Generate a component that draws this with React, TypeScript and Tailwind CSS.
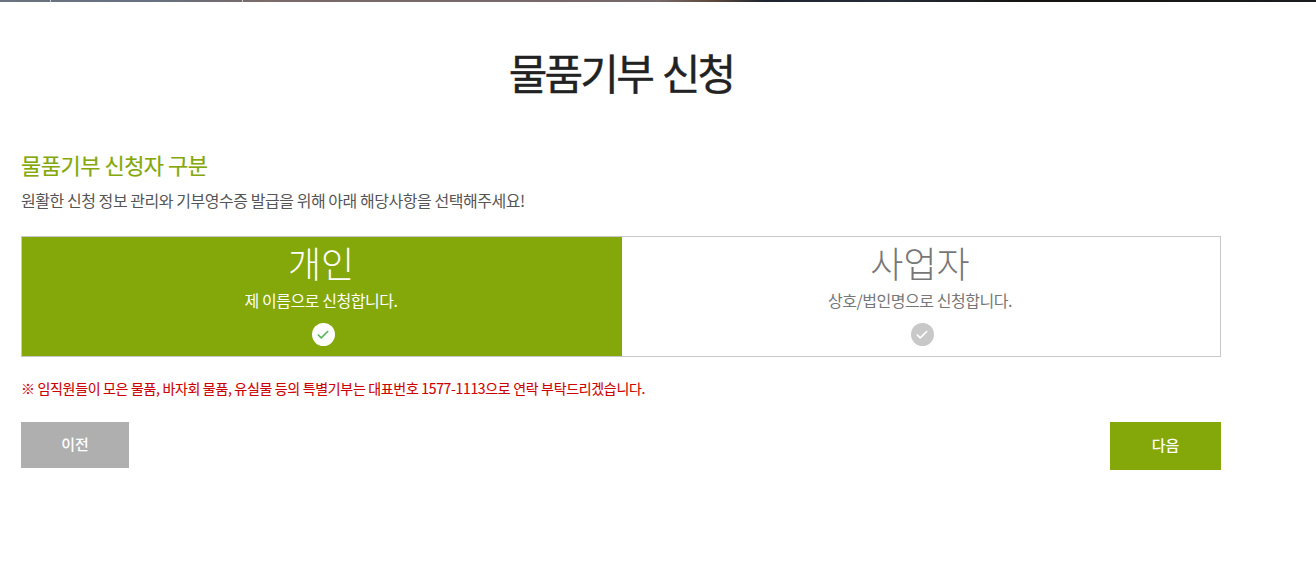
import React from 'react';
import { Check } from 'lucide-react';

const font = "font-['Noto_Sans_CJK_KR','Noto_Sans',sans-serif]";

export default function App() {
  return (
    <div className={`min-h-[582px] bg-white ${font}`}>
      {/* hero image edge */}
      <div className="flex h-[2px] w-full bg-[linear-gradient(90deg,#6b7280_0%,#66707e_12%,#7a6a68_20%,#75686a_50%,#5f4a3c_54%,#1f2530_58%,#262d38_68%,#14130f_78%,#1a1c1e_100%)]">
        <div className="ml-[50px] w-px bg-[#c9c9c9]" />
        <div className="ml-[191px] w-px bg-[#c9c9c9]" />
      </div>

      <div className="ml-[21px] w-[1200px]">
        <h1 className="mt-[42px] text-center text-[42px] leading-[56px] font-normal tracking-[-2.8px] [word-spacing:3px] text-[#222222] [-webkit-text-stroke:0.4px_#222222]">물품기부 신청</h1>

        <h2 className="mt-[50px] text-[22px] leading-[28px] font-normal tracking-[-0.5px] text-[#84a709] [-webkit-text-stroke:0.2px_#84a709]">물품기부 신청자 구분</h2>
        <p className="mt-[11px] text-[16px] leading-[22px] tracking-[-0.45px] text-[#555555]">원활한 신청 정보 관리와 기부영수증 발급을 위해 아래 해당사항을 선택해주세요!</p>

        <div className="mt-[25px] grid h-[121px] grid-cols-[600px_1fr] border border-[#c8c8c8]">
          <div className="flex flex-col items-center bg-[#84a709] pr-[2px] text-white">
            <div className="mt-[1px] text-[36px] leading-[48px] font-light">개인</div>
            <div className="mt-[4px] text-[16px] leading-[20px] tracking-[-0.45px]">제 이름으로 신청합니다.</div>
            <div className="mt-[13px] ml-[4px] flex h-[23px] w-[23px] items-center justify-center rounded-full bg-white">
              <Check size={14} strokeWidth={3} className="text-[#5cb85c]" />
            </div>
          </div>
          <div className="flex flex-col items-center bg-white pr-[2px] text-[#777777]">
            <div className="mt-[1px] text-[36px] leading-[48px] font-light">사업자</div>
            <div className="mt-[4px] text-[16px] leading-[20px] tracking-[-0.45px]">상호/법인명으로 신청합니다.</div>
            <div className="mt-[13px] ml-[4px] flex h-[23px] w-[23px] items-center justify-center rounded-full bg-[#c8c8c8]">
              <Check size={14} strokeWidth={3} className="text-white" />
            </div>
          </div>
        </div>

        <p className="mt-[21px] text-[14px] leading-[20px] tracking-[-0.33px] text-[#cc0000] [-webkit-text-stroke:0.1px_#cc0000]">※ 임직원들이 모은 물품, 바자회 물품, 유실물 등의 특별기부는 대표번호 1577-1113으로 연락 부탁드리겠습니다.</p>

        <div className="mt-[24px] flex items-start justify-between">
          <button className="h-[46px] w-[108px] bg-[#afafaf] pb-[2px] text-[15px] font-medium text-white">이전</button>
          <button className="h-[48px] w-[111px] bg-[#84a709] pb-[2px] text-[15px] font-medium text-white">다음</button>
        </div>
      </div>
    </div>
  );
}
